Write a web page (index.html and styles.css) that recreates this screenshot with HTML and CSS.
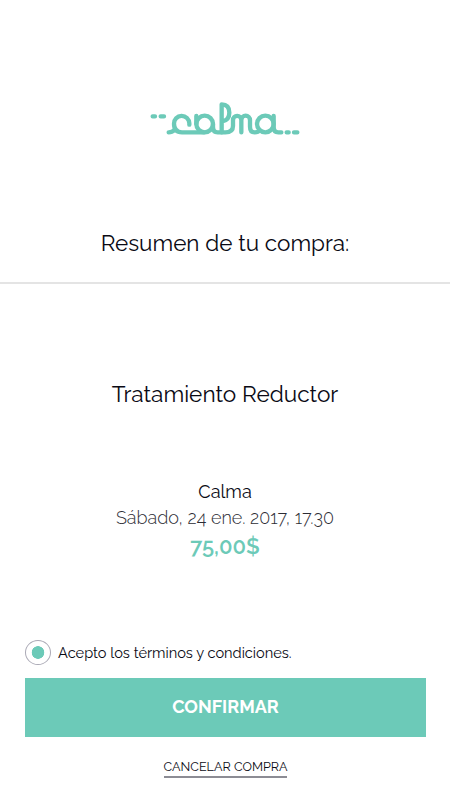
FILE: index.html
```html
<!DOCTYPE html>
<html lang="es">
<head>
    <meta charset="UTF-8">
    <meta name="viewport" content="width=device-width, initial-scale=1.0">
    <title>Calma - Resumen de tu compra</title>
    <link rel="stylesheet" href="styles.css">
</head>
<body>
    <header class="header">
        <svg class="logo" viewBox="30 30 450 111" role="img" aria-label="calma">
            <path d="M38 79H45M62 79H72M440 127H446M462 127H472"/>
            <path d="M86 127Q96 127 104 119"/>
            <path d="M148 104V100A23 23 0 0 0 102 101Q102 127 126 127H192"/>
            <path d="M169 78V102M219 102V110Q219 127 233 127H256Q279 127 279 108V90A12.5 12.5 0 0 1 304 90V127V90A13 13 0 0 1 330 90V110Q330 127 344 127Q355 127 359 121"/>
            <circle cx="194" cy="102" r="25"/>
            <path d="M245 127V43Q268 43 268 68Q268 90 247 94"/>
            <circle cx="376" cy="102" r="25"/>
            <path d="M401 78V110Q401 127 415 127H424"/>
        </svg>
        <h1 class="title">Resumen de tu compra:</h1>
    </header>

    <main class="summary">
        <h2 class="treatment">Tratamiento Reductor</h2>
        <p class="place">Calma</p>
        <p class="date">Sábado, 24 ene. 2017, 17.30</p>
        <p class="price">75,00$</p>
    </main>

    <form class="actions">
        <label class="terms">
            <input class="radio" type="radio" name="terms" checked>
            <span class="terms-text">Acepto los términos y condiciones.</span>
        </label>
        <button class="confirm" type="button">CONFIRMAR</button>
        <a class="cancel" href="#">CANCELAR COMPRA</a>
    </form>
</body>
</html>
```
FILE: styles.css
```css
* {
    box-sizing: border-box;
}
body {
    margin: 0;
    height: 800px;
    background-color: #fff;
    color: #0a0a14;
    font-family: Raleway, Lato, sans-serif;
    text-align: center;
}
h1, h2, p {
    margin: 0;
    font-weight: 400;
}
.header {
    height: 284px;
    padding-top: 100px;
    border-bottom: 2px solid #e4e4e4;
}
.logo {
    display: block;
    width: 150px;
    height: 37px;
    margin: 0 auto;
    fill: none;
    stroke: #6ccab8;
    stroke-width: 13;
    stroke-linecap: round;
    stroke-linejoin: round;
}
.title {
    margin-top: 91px;
    font-size: 22.5px;
    line-height: 30px;
}
.summary {
    height: 356px;
    padding-top: 95px;
}
.treatment {
    font-size: 22.6px;
    line-height: 30px;
}
.place {
    margin-top: 71px;
    font-size: 18px;
    line-height: 24px;
}
.date {
    color: #2c2c34;
    font-size: 18px;
    font-weight: 300;
    line-height: 28px;
}
.price {
    color: #6ccab8;
    font-size: 22px;
    font-weight: 600;
    line-height: 28px;
}
.actions {
    padding: 0 24px 0 25px;
}
.terms {
    display: flex;
    align-items: center;
    height: 25px;
}
.radio {
    appearance: none;
    width: 26px;
    height: 25px;
    margin: 0 7px 0 0;
    border: 1px solid #aaa9b5;
    border-radius: 50%;
    background: radial-gradient(circle, #6ccab8 6px, #fff 6.6px);
}
.terms-text {
    font-size: 14.6px;
    line-height: 20px;
}
.confirm {
    display: block;
    width: 100%;
    height: 59px;
    margin-top: 13px;
    padding: 0 0 2px;
    border: none;
    background-color: #6ccab8;
    color: #fff;
    font-family: inherit;
    font-size: 18px;
    font-weight: 700;
}
.cancel {
    display: inline-block;
    margin-top: 21px;
    border-bottom: 2px solid #8c8c94;
    color: #0a0a14;
    font-size: 12.6px;
    line-height: 18px;
    text-decoration: none;
}
```
